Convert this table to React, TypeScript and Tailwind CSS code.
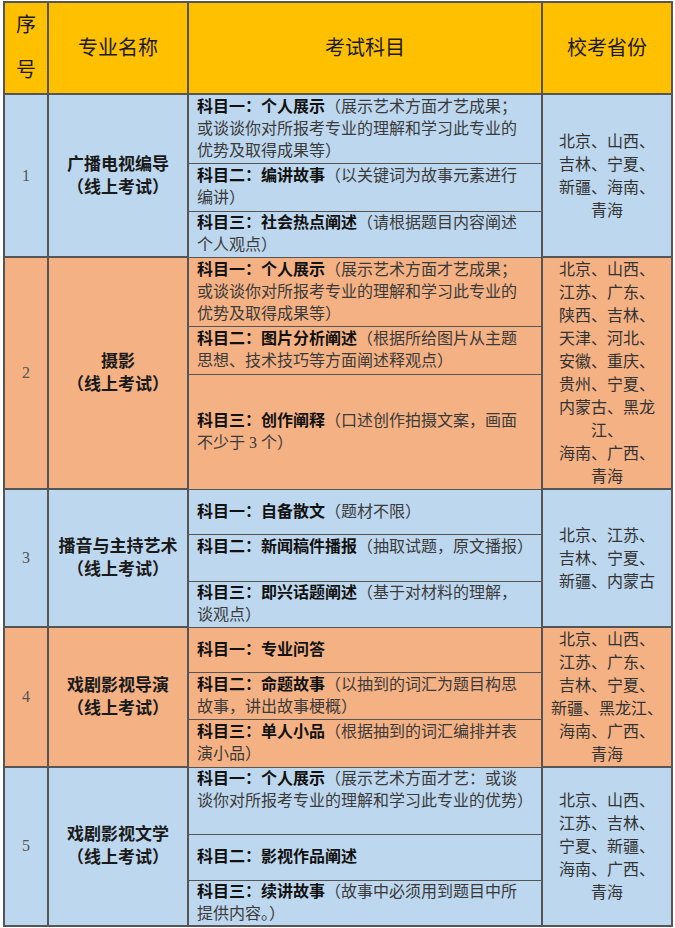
import React from 'react';

type Sub = { h: string; label: string; lines: string[] };
type Row = { no: string; name: string; bg: string; provinces: string[]; subs: Sub[] };

const BLUE = 'bg-[#bdd7ee]';
const ORANGE = 'bg-[#f4b183]';

const ROWS: Row[] = [
    {
        no: '1',
        name: '广播电视编导',
        bg: BLUE,
        provinces: ['北京、山西、', '吉林、宁夏、', '新疆、海南、', '青海'],
        subs: [
            { h: 'h-[69px]', label: '科目一：个人展示', lines: ['（展示艺术方面才艺成果；', '或谈谈你对所报考专业的理解和学习此专业的', '优势及取得成果等）'] },
            { h: 'h-[48px]', label: '科目二：编讲故事', lines: ['（以关键词为故事元素进行', '编讲）'] },
            { h: 'h-[46px]', label: '科目三：社会热点阐述', lines: ['（请根据题目内容阐述', '个人观点）'] },
        ],
    },
    {
        no: '2',
        name: '摄影',
        bg: ORANGE,
        provinces: ['北京、山西、', '江苏、广东、', '陕西、吉林、', '天津、河北、', '安徽、重庆、', '贵州、宁夏、', '内蒙古、黑龙', '江、', '海南、广西、', '青海'],
        subs: [
            { h: 'h-[68px]', label: '科目一：个人展示', lines: ['（展示艺术方面才艺成果；', '或谈谈你对所报考专业的理解和学习此专业的', '优势及取得成果等）'] },
            { h: 'h-[47px]', label: '科目二：图片分析阐述', lines: ['（根据所给图片从主题', '思想、技术技巧等方面阐述释观点）'] },
            { h: 'h-[113px]', label: '科目三：创作阐释', lines: ['（口述创作拍摄文案，画面', '不少于 3 个）'] },
        ],
    },
    {
        no: '3',
        name: '播音与主持艺术',
        bg: BLUE,
        provinces: ['北京、江苏、', '吉林、宁夏、', '新疆、内蒙古'],
        subs: [
            { h: 'h-[45px]', label: '科目一：自备散文', lines: ['（题材不限）'] },
            { h: 'h-[47px]', label: '科目二：新闻稿件播报', lines: ['（抽取试题，原文播报）', ''] },
            { h: 'h-[46px]', label: '科目三：即兴话题阐述', lines: ['（基于对材料的理解，', '谈观点）'] },
        ],
    },
    {
        no: '4',
        name: '戏剧影视导演',
        bg: ORANGE,
        provinces: ['北京、山西、', '江苏、广东、', '吉林、宁夏、', '新疆、黑龙江、', '海南、广西、', '青海'],
        subs: [
            { h: 'h-[45px]', label: '科目一：专业问答', lines: [''] },
            { h: 'h-[46px]', label: '科目二：命题故事', lines: ['（以抽到的词汇为题目构思', '故事，讲出故事梗概）'] },
            { h: 'h-[46px]', label: '科目三：单人小品', lines: ['（根据抽到的词汇编排并表', '演小品）'] },
        ],
    },
    {
        no: '5',
        name: '戏剧影视文学',
        bg: BLUE,
        provinces: ['北京、山西、', '江苏、吉林、', '宁夏、新疆、', '海南、广西、', '青海'],
        subs: [
            { h: 'h-[67px]', label: '科目一：个人展示', lines: ['（展示艺术方面才艺：或谈', '谈你对所报考专业的理解和学习此专业的优势）', ''] },
            { h: 'h-[46px]', label: '科目二：影视作品阐述', lines: [''] },
            { h: 'h-[44px]', label: '科目三：续讲故事', lines: ['（故事中必须用到题目中所', '提供内容。）'] },
        ],
    },
];

const FONT = { fontFamily: '"Liberation Serif", "Noto Sans CJK SC", serif' };

const App: React.FC = () => {
    return (
        <div className="bg-white pt-px pl-[3px] w-[675px]" style={FONT}>
            <table className="table-fixed border-collapse w-[668px] border-2 border-[#555]">
                <colgroup>
                    <col className="w-[44px]" />
                    <col className="w-[140px]" />
                    <col className="w-[354px]" />
                    <col className="w-[130px]" />
                </colgroup>
                <thead>
                    <tr className="bg-[#ffc000] text-[#1a1a1a] text-[20px]">
                        <th className="h-[89px] border-2 border-[#555] font-normal leading-[45px] p-0">
                            序<br />号
                        </th>
                        <th className="border-2 border-[#555] font-normal p-0">专业名称</th>
                        <th className="border-2 border-[#555] font-normal p-0">考试科目</th>
                        <th className="border-2 border-[#555] font-normal p-0">校考省份</th>
                    </tr>
                </thead>
                <tbody>
                    {ROWS.map(row =>
                        row.subs.map((sub, i) => (
                            <tr key={row.no + '-' + i} className={row.bg}>
                                {i === 0 && (
                                    <>
                                        <td rowSpan={3} className="border-2 border-[#555] text-center text-[16px] text-[#555] p-0">
                                            {row.no}
                                        </td>
                                        <td rowSpan={3} className="border-2 border-[#555] text-center text-[17px] leading-[23px] font-bold text-[#1a1a1a] p-0">
                                            <div>{row.name}</div>
                                            <div>（线上考试）</div>
                                        </td>
                                    </>
                                )}
                                <td className={`${sub.h} border-x-2 border-y border-[#555] pl-[8px] pr-0 py-0 text-[16px] leading-[22px] text-[#3a3a3a] whitespace-nowrap`}>
                                    <div>
                                        <span className="font-bold text-[#111]">{sub.label}</span>
                                        {sub.lines[0]}
                                    </div>
                                    {sub.lines.slice(1).map((l, j) => (
                                        <div key={j} className="h-[22px]">{l}</div>
                                    ))}
                                </td>
                                {i === 0 && (
                                    <td rowSpan={3} className="border-2 border-[#555] text-center text-[16px] leading-[23px] text-[#333] p-0 whitespace-nowrap">
                                        {row.provinces.map((p, j) => (
                                            <div key={j}>{p}</div>
                                        ))}
                                    </td>
                                )}
                            </tr>
                        ))
                    )}
                </tbody>
            </table>
        </div>
    );
};

export default App;
